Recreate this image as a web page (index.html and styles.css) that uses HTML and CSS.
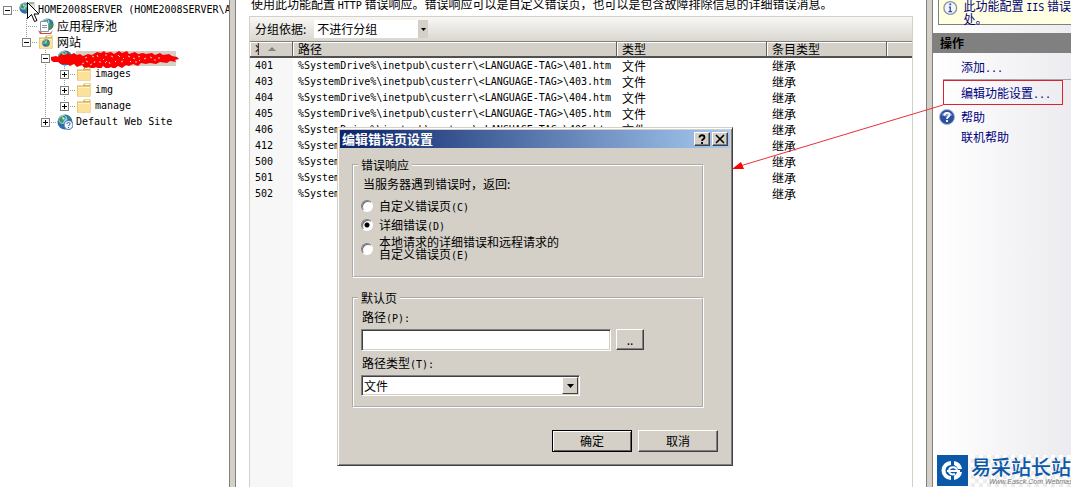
FILE: index.html
```html
<!DOCTYPE html>
<html lang="zh-CN">
<head>
    <meta charset="UTF-8">
    <meta name="viewport" content="width=device-width, initial-scale=1.0">
    <title>错误页</title>
    <link rel="stylesheet" href="styles.css">
</head>
<body>

    <!-- Shared icons -->
    <svg class="defs" width="0" height="0">
        <defs>
            <symbol id="globe" viewBox="0 0 16 16">
                <circle cx="8" cy="8" r="7.500" fill="#2f6fae"/>
                <circle cx="6" cy="5.500" r="4.500" fill="#9cc9ea"/>
                <path d="M2 5c2-3 4-3 6-3l1 2-2 2-1 3-3-1zM9 7l4-1 2 2-2 4-3 2-2-3zM11 2l3 3-3-1z" fill="#3d9a50"/>
                <path d="M5 3l3 1-2 2z" fill="#d6eefa"/>
            </symbol>
            <symbol id="folder" viewBox="0 0 16 16">
                <path d="M1 3.500h6l1-2h6.500v13H1z" fill="#d9b04c"/>
                <path d="M1.500 4.500h12.500v9.500H1.500z" fill="#fbe19a"/>
                <path d="M9 2.500h4.500" stroke="#fff" />
                <path d="M2 5.500h11.500" stroke="#fff3c8"/>
            </symbol>
        </defs>
    </svg>

    <div class="app">
        <!-- Connections tree -->
        <nav class="sidebar">
            <ul class="tree">
                <li>
                    <div class="node">
                        <span class="box minus"></span><span class="dots"></span>
                        <svg class="icon" viewBox="0 0 16 16"><use href="#globe" width="12" height="12"/><path d="M10 0h6v14h-6z" fill="#dcdcdc"/><path d="M10 1h5M11 12h4" stroke="#4a9c4a"/></svg>
                        <span class="en">HOME2008SERVER (HOME2008SERVER\Administrator)</span>
                        <svg class="cursor" width="14" height="22" viewBox="0 0 14 22"><path d="M1.500 1.500v16l4-4 3 7 2.500-1-3-6.500H13z" fill="#fff" stroke="#000"/></svg>
                    </div>
                    <ul>
                        <li>
                            <div class="node">
                                <span class="box none"></span><span class="dots"></span>
                                <svg class="icon" viewBox="0 0 16 16"><use href="#globe" x="3" width="13" height="13"/><path d="M2.500 3.500h6l2 2v8h-8z" fill="#fff" stroke="#8795a8"/><path d="M4 7.500h5M4 9.500h5" stroke="#8795a8"/><path d="M0 12l4 3h8l3-3-2 4H2z" fill="#c84848"/></svg>
                                <span>应用程序池</span>
                            </div>
                        </li>
                        <li>
                            <div class="node">
                                <span class="box minus"></span><span class="dots"></span>
                                <svg class="icon" viewBox="0 0 16 16"><use href="#folder"/><use href="#globe" x="4" y="5" width="8" height="8"/></svg>
                                <span>网站</span>
                            </div>
                            <ul>
                                <li>
                                    <div class="node selected">
                                        <span class="box minus"></span><span class="dots"></span>
                                        <svg class="icon"><use href="#globe"/></svg>
                                        <span class="masked"></span>
                                        <svg class="scribble" viewBox="0 0 128 18" width="128" height="18">
                                            <path d="M0 7l5-1 2 1 3-3 4 1 3-2 2 2 4-2 3 2 3-1 3 2 5-2 4 1 5-3 4 1 3-2 2 2 5-1 3 2 5-3 3 2 5-2 2 3 6-2 3 2 5-1 3 1 6-1 3 2 5-2 3 2 6-1 3 2 5 1 2 2-4 1 1 2-6-1-3 2-7-1-4 2-6-1-4 1-5-1-3 3-5-2-4 2-3-1-4 3-4-2-4 3-3-2-4 2-4-3-3 4-4-3-5 3-2-3-4 2-3-4-5 2-3-3-4 2-3-2-6 0-3-2-5 0-2-2z" fill="#fb0000"/>
                                            <path d="M31 14l2-1M35 11l2 1M39 15l2-1M41 6l2 1M43 13l1-2M46 5l1 2M48 12l2 0M52 9l1 1M54 13l2-2M58 12l1 2M60 6l2 1M64 11l1 1M67 5l2 2M70 12l2-1M72 8l1 1M77 6l2 1M79 11l1 1M82 8l2 1M87 6l2 1M88 11l1-1M93 9l2-1M99 7l2 1M107 8l2 0M34 8l2-1M54 5l2 0M103 10l2 0M84 12l2 0" stroke="#f6caca" fill="none"/>
                                        </svg>
                                    </div>
                                    <ul>
                                        <li><div class="node"><span class="box plus"></span><span class="dots"></span><svg class="icon"><use href="#folder"/></svg><span class="en">images</span></div></li>
                                        <li><div class="node"><span class="box plus"></span><span class="dots"></span><svg class="icon"><use href="#folder"/></svg><span class="en">img</span></div></li>
                                        <li><div class="node"><span class="box plus"></span><span class="dots"></span><svg class="icon"><use href="#folder"/></svg><span class="en">manage</span></div></li>
                                    </ul>
                                </li>
                                <li>
                                    <div class="node">
                                        <span class="box plus"></span><span class="dots"></span>
                                        <svg class="icon" viewBox="0 0 16 16"><use href="#globe"/><circle cx="11.500" cy="11" r="4.500" fill="#eef4fb" stroke="#3e6fa6"/><path d="M10 10c0-2 3-2 3 0 0 1-1.500 1-1.500 2M11.500 13v1" fill="none" stroke="#1c4f8c"/></svg>
                                        <span class="en">Default Web Site</span>
                                    </div>
                                </li>
                            </ul>
                        </li>
                    </ul>
                </li>
            </ul>
        </nav>

        <div class="splitter"></div>

        <!-- Error pages list -->
        <main class="content">
            <p class="intro">使用此功能配置 <span class="en">HTTP</span> 错误响应。错误响应可以是自定义错误页，也可以是包含故障排除信息的详细错误消息。</p>
            <div class="list-view">
                <div class="toolbar">
                    <label for="group-by">分组依据:</label>
                    <div class="combo flat">
                        <select id="group-by"><option>不进行分组</option></select>
                        <span class="drop"><svg width="5" height="3"><path d="M0 0h5L2.500 3z"/></svg></span>
                    </div>
                </div>
                <table>
                    <colgroup><col class="c-code"><col class="c-path"><col class="c-type"><col class="c-entry"><col></colgroup>
                    <thead>
                        <tr>
                            <th><div class="sorted"><span>状态代码</span><svg width="8" height="4"><path d="M4 0l4 4H0z" fill="#85827c"/></svg></div></th>
                            <th>路径</th><th>类型</th><th>条目类型</th><th></th>
                        </tr>
                    </thead>
                    <tbody>
                        <tr><td class="en">401</td><td class="en">%SystemDrive%\inetpub\custerr\&lt;LANGUAGE-TAG&gt;\401.htm</td><td>文件</td><td>继承</td><td></td></tr>
                        <tr><td class="en">403</td><td class="en">%SystemDrive%\inetpub\custerr\&lt;LANGUAGE-TAG&gt;\403.htm</td><td>文件</td><td>继承</td><td></td></tr>
                        <tr><td class="en">404</td><td class="en">%SystemDrive%\inetpub\custerr\&lt;LANGUAGE-TAG&gt;\404.htm</td><td>文件</td><td>继承</td><td></td></tr>
                        <tr><td class="en">405</td><td class="en">%SystemDrive%\inetpub\custerr\&lt;LANGUAGE-TAG&gt;\405.htm</td><td>文件</td><td>继承</td><td></td></tr>
                        <tr><td class="en">406</td><td class="en">%SystemDrive%\inetpub\custerr\&lt;LANGUAGE-TAG&gt;\406.htm</td><td>文件</td><td>继承</td><td></td></tr>
                        <tr><td class="en">412</td><td class="en">%SystemDrive%\inetpub\custerr\&lt;LANGUAGE-TAG&gt;\412.htm</td><td>文件</td><td>继承</td><td></td></tr>
                        <tr><td class="en">500</td><td class="en">%SystemDrive%\inetpub\custerr\&lt;LANGUAGE-TAG&gt;\500.htm</td><td>文件</td><td>继承</td><td></td></tr>
                        <tr><td class="en">501</td><td class="en">%SystemDrive%\inetpub\custerr\&lt;LANGUAGE-TAG&gt;\501.htm</td><td>文件</td><td>继承</td><td></td></tr>
                        <tr><td class="en">502</td><td class="en">%SystemDrive%\inetpub\custerr\&lt;LANGUAGE-TAG&gt;\502.htm</td><td>文件</td><td>继承</td><td></td></tr>
                    </tbody>
                </table>
            </div>
        </main>

        <div class="splitter"></div>

        <!-- Actions pane -->
        <aside class="actions">
            <div class="notice">
                <svg width="16" height="16" viewBox="0 0 16 16"><circle cx="8" cy="8" r="7" fill="#f4f6fb" stroke="#8a94a8" stroke-width="1.500"/><path d="M8 3v2" stroke="#2a50b8" stroke-width="2"/><path d="M6.500 7H8v5M6 12h4" fill="none" stroke="#2a50b8" stroke-width="1.500"/></svg>
                <p>此功能配置 <span class="en">IIS</span> 错误<br>处。</p>
            </div>
            <h2>操作</h2>
            <ul class="links">
                <li><a href="#">添加<span class="en">...</span></a></li>
                <li class="marked"><a href="#">编辑功能设置<span class="en">...</span></a></li>
                <li class="help"><svg width="16" height="16" viewBox="0 0 16 16"><circle cx="8" cy="8" r="7.500" fill="#2c4f9e" stroke="#a9b6d2"/><path d="M2.500 6a6 5 0 0 1 11 0q-5 3-11 0z" fill="#7f9bd8"/><path d="M5.500 6.500c0-3.500 5-3.500 5-.5 0 2-2.500 1.500-2.500 4M8 11v2" fill="none" stroke="#fff" stroke-width="1.800"/></svg><a href="#">帮助</a></li>
                <li><a href="#">联机帮助</a></li>
            </ul>
            <div class="brand">
                <svg width="31" height="31" viewBox="0 0 31 31"><path d="M0 0h31v31H0z" fill="#0b58a8"/><path d="M14 6a9.500 9.500 0 0 0 0 19v-4a5.500 5.500 0 0 1 0-11zM17 6a9.500 9.500 0 0 1 8 8h-4a5.500 5.500 0 0 0-4-4zM25 17a9.500 9.500 0 0 1-8 8v-4a5.500 5.500 0 0 0 3-4z" fill="#fff"/><path d="M10 16h13M12 16c0-5 8-5 8 0M12 16c0 3 3 4 6 3" fill="none" stroke="#fff" stroke-width="2"/></svg>
                <div class="brand-text">
                    <strong>易采站长站</strong>
                    <small>Www.Easck.Com Webmaster</small>
                </div>
            </div>
        </aside>
    </div>

    <!-- Arrow from the action to the dialog -->
    <svg class="arrow" width="212" height="68" viewBox="0 0 212 68">
        <path d="M211 1L8 62" stroke="#e8303a" fill="none"/>
        <path d="M0 65l9-7 3 7z" fill="#fb0000"/>
    </svg>

    <!-- Edit error pages settings dialog -->
    <form class="dialog" role="dialog" aria-labelledby="dialog-title">
        <div class="title-bar">
            <h1 id="dialog-title">编辑错误页设置</h1>
            <button type="button" aria-label="帮助"><svg width="10" height="10" viewBox="0 0 10 10"><path d="M2.500 3.500c0-3 5-3 5 0C7.500 5 5 5 5 7M5 8v2" fill="none" stroke="#000" stroke-width="1.800"/></svg></button>
            <button type="button" aria-label="关闭"><svg width="10" height="10" viewBox="0 0 10 10"><path d="M1 1l8 8M9 1L1 9" stroke="#000" stroke-width="1.600"/></svg></button>
        </div>
        <div class="dialog-body">
            <fieldset>
                <legend>错误响应</legend>
                <p>当服务器遇到错误时，返回:</p>
                <div class="options">
                    <label><input type="radio" name="mode"><span>自定义错误页<span class="en">(C)</span></span></label>
                    <label><input type="radio" name="mode" checked><span>详细错误<span class="en">(D)</span></span></label>
                    <label class="two-line"><input type="radio" name="mode"><span>本地请求的详细错误和远程请求的<br>自定义错误页<span class="en">(E)</span></span></label>
                </div>
            </fieldset>
            <fieldset>
                <legend>默认页</legend>
                <label for="path">路径<span class="en">(P):</span></label>
                <div class="path-row">
                    <input type="text" id="path">
                    <button type="button" class="browse">..</button>
                </div>
                <label for="path-type">路径类型<span class="en">(T):</span></label>
                <div class="combo sunken">
                    <select id="path-type"><option>文件</option></select>
                    <span class="drop"><svg width="7" height="4"><path d="M0 0h7L3.500 4z"/></svg></span>
                </div>
            </fieldset>
            <div class="buttons">
                <button type="button" class="default">确定</button>
                <button type="button">取消</button>
            </div>
        </div>
    </form>

</body>
</html>
```
FILE: styles.css
```css
/* General styles */
* {
    box-sizing: border-box;
}

body {
    position: relative;
    margin: 0;
    background-color: #fff;
    color: #000;
    font-family: "Noto Sans CJK SC", sans-serif;
    font-size: 12px;
    line-height: 16px;
    overflow: hidden;
}

h1, h2, p, ul {
    margin: 0;
    padding: 0;
}

ul {
    list-style: none;
}

button, select, input {
    font: inherit;
    color: inherit;
    margin: 0;
}

.defs {
    position: absolute;
}

/* Latin text runs at half the width of a Chinese character */
.en {
    font-family: "DejaVu Sans Mono", monospace;
    font-size: 10px;
}

span.en {
    line-height: 1;
}

.app {
    display: flex;
    height: 100vh;
}

.splitter {
    flex: none;
    width: 7px;
    background-color: #d4d0c8;
    border-left: 1px solid #808080;
    border-right: 1px solid #808080;
}

/* Connections tree */
.sidebar {
    flex: none;
    width: 229px;
    padding-top: 2px;
    overflow: hidden;
    white-space: nowrap;
}

.tree ul {
    margin-left: 19px;
}

.tree ul > li {
    background: repeating-linear-gradient(#999 0 1px, transparent 1px 2px) 7px 0 / 1px 100% no-repeat;
}

.tree ul > li:last-child {
    background-size: 1px 8px;
}

.node {
    position: relative;
    display: flex;
    align-items: center;
    height: 16px;
    padding-left: 3px;
}

.box {
    flex: none;
    width: 9px;
    height: 9px;
    border: 1px solid #808080;
    background: linear-gradient(#000, #000) 1px 3px / 5px 1px no-repeat #fff;
}

.box.plus {
    background: linear-gradient(#000, #000) 1px 3px / 5px 1px no-repeat, linear-gradient(#000, #000) 3px 1px / 1px 5px no-repeat #fff;
}

.box.none {
    border: none;
    background: repeating-linear-gradient(90deg, #999 0 1px, transparent 1px 2px) 4px 4px / 5px 1px no-repeat;
}

.dots {
    flex: none;
    width: 7px;
    height: 1px;
    background: repeating-linear-gradient(90deg, transparent 0 1px, #999 1px 2px);
}

.icon {
    flex: none;
    width: 16px;
    height: 16px;
    margin-right: 3px;
}

.cursor {
    position: absolute;
    left: 26px;
    top: -1px;
    z-index: 1;
}

.masked {
    width: 100px;
    height: 15px;
    background-color: #d4d0c8;
}

.scribble {
    position: absolute;
    left: 13px;
    top: 0;
}

/* Error pages list */
.content {
    flex: 1;
    min-width: 0;
    display: flex;
    flex-direction: column;
    padding: 0 13px;
    margin-top: -4px;
}

.intro {
    padding-left: 2px;
    margin-bottom: 4px;
    white-space: nowrap;
}

.list-view {
    flex: 1;
    border: 1px solid #d4d0c8;
    border-bottom: none;
    background: linear-gradient(90deg, #f7f7f7 43px, #fff 43px);
}

.toolbar {
    display: flex;
    align-items: center;
    gap: 8px;
    height: 24px;
    padding-left: 5px;
    background: linear-gradient(#f8f7f5, #dad7d0);
}

.combo {
    position: relative;
}

.combo select {
    appearance: none;
    display: block;
    width: 100%;
    height: 100%;
    padding: 0 3px;
    border: none;
    border-radius: 0;
    background-color: #fff;
}

.drop {
    position: absolute;
    top: 0;
    right: 0;
    bottom: 0;
    display: flex;
    align-items: center;
    justify-content: center;
    background-color: #d4d0c8;
    pointer-events: none;
}

.flat {
    width: 114px;
    height: 18px;
}

.flat .drop {
    width: 10px;
}

table {
    width: 100%;
    table-layout: fixed;
    border-collapse: separate;
    border-spacing: 0;
}

.c-code {
    width: 43px;
}

.c-path {
    width: 324px;
}

.c-type {
    width: 150px;
}

.c-entry {
    width: 120px;
}

th, td {
    height: 16px;
    padding: 0 5px;
    text-align: left;
    font-weight: normal;
    white-space: nowrap;
    overflow: hidden;
    line-height: 16px;
}

th {
    height: 17px;
    line-height: 14px;
    background-color: #d4d0c8;
    border-top: 1px solid #808080;
    border-right: 1px solid #606060;
    border-bottom: 2px solid #505050;
    box-shadow: inset 1px 1px #fff;
}

th:last-child {
    border-right: none;
}

.sorted {
    display: flex;
    align-items: center;
    gap: 9px;
}

.sorted span {
    width: 4px;
    overflow: hidden;
}

/* Actions pane */
.actions {
    flex: none;
    width: 138px;
    display: flex;
    flex-direction: column;
    overflow: hidden;
    white-space: nowrap;
    color: #000080;
    background: linear-gradient(90deg, #fff, #ececf0);
}

.notice {
    display: flex;
    gap: 6px;
    height: 25px;
    margin-left: 5px;
    padding-left: 4px;
    border: 1px solid #808080;
    border-top: none;
    border-right: none;
    background-color: #ffffe1;
}

.notice p {
    line-height: 12px;
}

.actions h2 {
    margin-top: 8px;
    padding-left: 7px;
    background-color: #808080;
    color: #000;
    font-size: 12px;
    line-height: 20px;
}

.links {
    padding: 4px 0 0 10px;
}

.links li {
    padding: 0 0 0 18px;
    line-height: 20px;
}

.links a {
    color: #000080;
    text-decoration: none;
}

.links li:first-child {
    padding-bottom: 2px;
    border-bottom: 1px solid #a8a8a8;
}

.links .marked {
    width: 120px;
    margin-bottom: 2px;
    padding-left: 17px;
    border: 1px solid #e02030;
    line-height: 23px;
}

.links .help {
    display: flex;
    align-items: center;
    gap: 6px;
    padding-left: 0;
    margin-left: -4px;
}

.brand {
    display: flex;
    gap: 3px;
    height: 32px;
    margin-top: auto;
    padding-left: 4px;
}

.brand svg {
    flex: none;
}

.brand-text {
    display: flex;
    flex-direction: column;
    background: repeating-conic-gradient(#ececec 0 25%, #fff 0 50%) 0 0 / 8px 8px;
}

.brand strong {
    color: #0b58a8;
    font-size: 20px;
    font-weight: 500;
    line-height: 23px;
}

.brand small {
    padding-left: 18px;
    color: #777;
    font-family: "Liberation Sans", sans-serif;
    font-size: 7px;
    font-style: italic;
    line-height: 7px;
}

.arrow {
    position: absolute;
    top: 104px;
    right: 127px;
}

/* Dialog */
.dialog {
    position: absolute;
    left: 337px;
    top: 127px;
    width: 396px;
    background-color: #d4d0c8;
    border: 1px solid #d4d0c8;
    border-right-color: #404040;
    border-bottom-color: #404040;
    box-shadow: inset 1px 1px #fff, inset -1px -1px #808080;
    padding: 2px;
}

.title-bar {
    display: flex;
    align-items: center;
    gap: 2px;
    height: 18px;
    padding: 0 2px;
    background: linear-gradient(90deg, #0a246a, #a6caf0);
}

.title-bar h1 {
    flex: 1;
    color: #fff;
    font-size: 13px;
    line-height: 18px;
}

button {
    padding: 0;
    border: 1px solid #fff;
    border-right-color: #404040;
    border-bottom-color: #404040;
    box-shadow: inset -1px -1px #808080;
    background-color: #d4d0c8;
}

.title-bar button {
    display: flex;
    align-items: center;
    justify-content: center;
    width: 16px;
    height: 14px;
}

.dialog-body {
    padding: 9px 26px 11px 12px;
}

fieldset {
    margin: 0 0 12px;
    padding: 3px 7px 15px;
    border: 2px groove #fff;
}

fieldset + fieldset {
    padding-bottom: 10px;
}

legend {
    margin-left: -3px;
    padding: 0 3px;
}

fieldset p {
    padding-left: 2px;
}

fieldset > label {
    display: block;
    padding-left: 1px;
}

.options {
    display: flex;
    flex-direction: column;
    gap: 3px;
    margin-top: 6px;
}

.options label {
    display: flex;
    align-items: center;
    gap: 6px;
}

.options .two-line {
    line-height: 12px;
}

input[type="radio"] {
    appearance: none;
    width: 12px;
    height: 12px;
    border: 1px solid #808080;
    border-right-color: #fff;
    border-bottom-color: #fff;
    border-radius: 50%;
    background-color: #fff;
    box-shadow: inset 1px 1px #707070;
}

input[type="radio"]:checked {
    background-image: radial-gradient(circle, #000 2px, transparent 3px);
}

.path-row {
    display: flex;
    gap: 5px;
    margin: 4px 0;
}

input[type="text"] {
    width: 250px;
    height: 22px;
    padding: 0 3px;
    border: 1px solid #808080;
    border-right-color: #fff;
    border-bottom-color: #fff;
    box-shadow: inset 1px 1px #404040, inset -1px -1px #d4d0c8;
}

.browse {
    width: 28px;
    height: 21px;
}

.sunken {
    width: 219px;
    height: 21px;
    margin-top: 4px;
    border: 1px solid #808080;
    border-right-color: #fff;
    border-bottom-color: #fff;
    box-shadow: inset 1px 1px #404040;
    padding: 1px;
}

.sunken select {
    padding: 0 1px;
}

.sunken .drop {
    top: 1px;
    right: 1px;
    bottom: 1px;
    width: 16px;
    border: 1px solid #fff;
    border-right-color: #404040;
    border-bottom-color: #404040;
}

.buttons {
    display: flex;
    justify-content: flex-end;
    gap: 6px;
    margin: 22px -14px 0 0;
}

.buttons button {
    width: 80px;
    height: 22px;
}

.buttons .default {
    border-color: #000;
    box-shadow: inset 1px 1px #fff, inset -1px -1px #606060;
}
```
